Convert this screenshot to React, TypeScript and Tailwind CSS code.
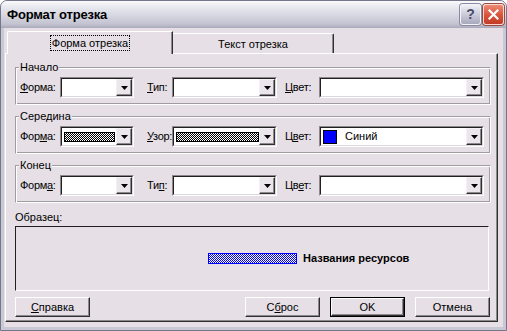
import type { ReactNode } from "react";

const face = "bg-[#e6dfe6]";

function DropButton() {
  return (
    <div className="flex h-full w-[16px] shrink-0 items-center justify-center border border-t-[#f4f0f4] border-l-[#f4f0f4] border-r-[#303030] border-b-[#303030] bg-[#ebe6eb] shadow-[inset_-1px_-1px_0_#8c888c]">
      <svg width="7" height="4" viewBox="0 0 7 4" className="mt-[1px]">
        <polygon points="0,0 7,0 3.5,4" fill="#000" />
      </svg>
    </div>
  );
}

function Combo({ w, children }: { w: string; children?: ReactNode }) {
  return (
    <div
      className={`${w} h-[21px] shrink-0 border border-t-[#8c888c] border-l-[#8c888c] border-r-white border-b-white`}
    >
      <div className="flex h-full border border-t-[#202020] border-l-[#202020] border-r-[#ddd8dd] border-b-[#ddd8dd] bg-white">
        <div className="flex min-w-0 flex-1 items-center">{children}</div>
        <DropButton />
      </div>
    </div>
  );
}

function Pattern({ w }: { w: string }) {
  return (
    <div
      className={`${w} ml-[2px] h-[10px] border border-black bg-[repeating-conic-gradient(#000_0%_25%,#ffffff_0%_50%)] bg-size-[2px_2px]`}
    />
  );
}

function Group({ title, children }: { title: string; children: ReactNode }) {
  return (
    <div className="flex h-[38px] flex-col border border-t-[#a09ca0] border-l-[#a09ca0] border-r-white border-b-white shadow-[inset_1px_1px_0_#ffffff,inset_-1px_-1px_0_#a09ca0]">
      <span className={`-mt-[7px] ml-[3px] self-start px-[1px] leading-[13px] ${face}`}>{title}</span>
      <div className="mt-[3px] flex items-center pl-[4px]">{children}</div>
    </div>
  );
}

function Label({ w, ml, children }: { w: string; ml?: string; children: ReactNode }) {
  return <span className={`${w} ${ml ?? ""} shrink-0 tracking-[-0.3px]`}>{children}</span>;
}

function Button({ children, def }: { children: ReactNode; def?: boolean }) {
  const inner = (
    <div className="flex h-full w-full items-center justify-center border border-t-white border-l-white border-r-[#303030] border-b-[#303030] shadow-[inset_-1px_-1px_0_#8c888c]">
      {children}
    </div>
  );
  return def ? (
    <div className={`h-[20px] w-[75px] border border-black ${face}`}>{inner}</div>
  ) : (
    <div className={`h-[20px] w-[75px] ${face}`}>{inner}</div>
  );
}

export default function App() {
  return (
    <div className="h-[331px] w-[507px] font-['Liberation_Sans',Arial,sans-serif] text-[11px] text-black">
      <div className="flex h-full flex-col rounded-t-[7px] border border-[#76768a] bg-[#c9c9d6]">
        {/* title bar */}
        <div className="flex h-[27px] shrink-0 items-center rounded-t-[6px] bg-[linear-gradient(to_bottom,#fbfbfd_0%,#e8e8ef_22%,#d6d6e1_55%,#c3c3d1_85%,#a9a9bc_100%)] pr-[2px] pl-[6px]">
          <span className="flex-1 text-[13px] font-bold tracking-[-0.2px]">Формат отрезка</span>
          <div className="flex h-[21px] w-[21px] items-center justify-center rounded-[3px] border border-[#f4f4f8] bg-[linear-gradient(to_bottom,#f0f0f6,#c4c4d4_60%,#a8a8bc)] shadow-[0_0_0_1px_#8a8aa0]">
            <span className="text-[14px] font-bold text-[#4a4a66]">?</span>
          </div>
          <div className="ml-[2px] flex h-[21px] w-[21px] items-center justify-center rounded-[3px] border border-[#f8d8d0] bg-[linear-gradient(to_bottom,#ec8a74,#d8523a_55%,#c23c26)] shadow-[0_0_0_1px_#9a4a40]">
            <svg width="11" height="11" viewBox="0 0 11 11">
              <path d="M1.5 1.5 L9.5 9.5 M9.5 1.5 L1.5 9.5" stroke="#fff" strokeWidth="2.2" strokeLinecap="square" />
            </svg>
          </div>
        </div>

        {/* client area */}
        <div className={`mx-[3px] mb-[3px] flex flex-1 flex-col pt-[3px] pr-[5px] pb-[5px] pl-[1px] ${face}`}>
          {/* tabs */}
          <div className="flex h-[22px] items-end pl-[2px]">
            <div className={`relative z-10 -mb-[1px] flex h-[23px] w-[166px] items-center justify-center rounded-tl-[2px] border-t border-l border-r border-t-white border-l-white border-r-[#303030] shadow-[inset_-1px_0_0_#8c888c] ${face}`}>
              <span className="outline outline-1 outline-dotted outline-black px-[1px] leading-[14px]">
                Форма отрезка
              </span>
            </div>
            <div className="flex h-[20px] w-[161px] items-center justify-center rounded-tr-[2px] border-t border-r border-t-white border-r-[#303030] pt-[2px] shadow-[inset_-1px_0_0_#8c888c]">
              Текст отрезка
            </div>
          </div>

          {/* panel */}
          <div className="flex flex-1 flex-col border border-t-white border-l-white border-r-[#303030] border-b-[#303030] pt-[13px] pr-[6px] pb-[3px] pl-[9px] shadow-[inset_-1px_-1px_0_#8c888c]">
            <Group title="Начало">
              <Label w="w-[40px]">
                <u>Ф</u>орма:
              </Label>
              <Combo w="w-[74px]" />
              <Label w="w-[25px]" ml="ml-[13px]">
                <u>Т</u>ип:
              </Label>
              <Combo w="w-[105px]" />
              <Label w="w-[34px]" ml="ml-[8px]">
                <u>Ц</u>вет:
              </Label>
              <Combo w="w-[165px]" />
            </Group>

            <div className="mt-[11px]">
              <Group title="Середина">
                <Label w="w-[40px]">
                  Фор<u>м</u>а:
                </Label>
                <Combo w="w-[74px]">
                  <Pattern w="w-[51px]" />
                </Combo>
                <Label w="w-[25px]" ml="ml-[13px]">
                  <u>У</u>зор:
                </Label>
                <Combo w="w-[105px]">
                  <Pattern w="w-[84px]" />
                </Combo>
                <Label w="w-[34px]" ml="ml-[8px]">
                  Ц<u>в</u>ет:
                </Label>
                <Combo w="w-[165px]">
                  <div className="ml-[2px] h-[14px] w-[14px] border border-black bg-[#0000ff]" />
                  <span className="ml-[8px]">Синий</span>
                </Combo>
              </Group>
            </div>

            <div className="mt-[11px]">
              <Group title="Конец">
                <Label w="w-[40px]">
                  Форм<u>а</u>:
                </Label>
                <Combo w="w-[74px]" />
                <Label w="w-[25px]" ml="ml-[13px]">
                  Ти<u>п</u>:
                </Label>
                <Combo w="w-[105px]" />
                <Label w="w-[34px]" ml="ml-[8px]">
                  Цв<u>е</u>т:
                </Label>
                <Combo w="w-[165px]" />
              </Group>
            </div>

            <span className="mt-[8px] leading-[13px]">Образец:</span>

            <div className="mt-[2px] flex h-[65px] w-[474px] items-center border border-t-[#202020] border-l-[#202020] border-r-white border-b-white pl-[192px]">
              <div className="h-[11px] w-[89px] border border-[#0000ff] bg-[repeating-conic-gradient(#0000ff_0%_25%,#ffffff_0%_50%)] bg-size-[2px_2px]" />
              <span className="ml-[6px] font-bold">Названия ресурсов</span>
            </div>

            <div className="mt-[6px] flex w-[475px] items-center">
              <Button>
                <span>
                  <u>С</u>правка
                </span>
              </Button>
              <div className="flex-1" />
              <Button>
                <span>
                  С<u>б</u>рос
                </span>
              </Button>
              <div className="ml-[10px]">
                <Button def>OK</Button>
              </div>
              <div className="ml-[10px]">
                <Button>Отмена</Button>
              </div>
            </div>
          </div>
        </div>
      </div>
    </div>
  );
}
